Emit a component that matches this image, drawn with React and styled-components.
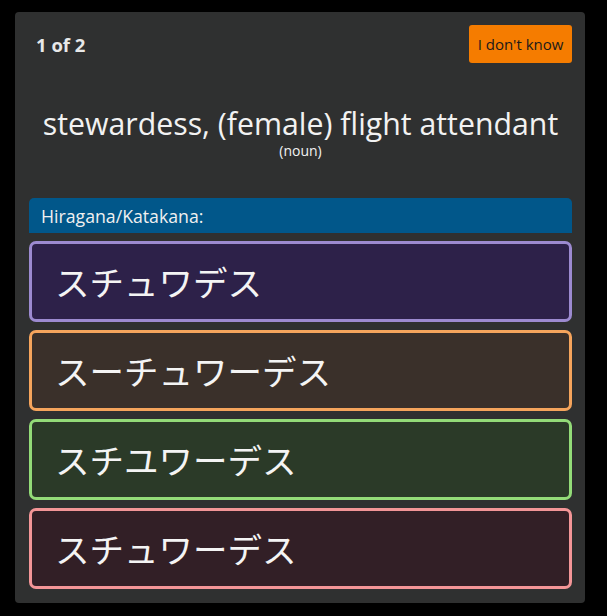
import React from "react";
import styled, { createGlobalStyle } from "styled-components";

const Global = createGlobalStyle`
  html, body { margin: 0; padding: 0; background: #000; }
  body { font-family: "Open Sans", "Noto Sans", sans-serif; }
  * { box-sizing: border-box; }
`;

const Page = styled.div`
  padding: 12px 22px 13px 15px;
  width: 607px;
`;

const Card = styled.div`
  width: 570px;
  background: #2f3030;
  border-radius: 4px;
  padding: 13px 13px 14px 14px;
  display: flex;
  flex-direction: column;
`;

const TopRow = styled.div`
  display: flex;
  justify-content: space-between;
  align-items: center;
`;

const Counter = styled.div`
  color: #e8e8e8;
  font-weight: 700;
  font-size: 18.5px;
  padding-left: 7px;
  padding-top: 1px;
`;

const Button = styled.button`
  background: #f57c00;
  color: #1a1a1a;
  border: none;
  border-radius: 3px;
  font-family: "Open Sans", sans-serif;
  font-size: 15px;
  height: 38px;
  width: 103px;
  padding: 0;
`;

const Prompt = styled.div`
  text-align: center;
  color: #f2f2f2;
  margin-top: 43px;
  margin-bottom: 38px;
`;

const Word = styled.div`
  font-size: 30.3px;
  line-height: 36px;
`;

const Pos = styled.div`
  font-size: 14px;
  line-height: 18px;
`;

const Header = styled.div`
  background: #01578a;
  color: #f0f0f0;
  font-size: 17.7px;
  height: 35px;
  display: flex;
  align-items: center;
  padding-left: 12px;
  border-radius: 5px 5px 0 0;
  margin-bottom: 8px;
`;

const Options = styled.div`
  display: flex;
  flex-direction: column;
  gap: 8px;
`;

const Option = styled.div`
  height: 81px;
  border: 3px solid ${(p) => p.$border};
  background: ${(p) => p.$bg};
  border-radius: 7px;
  display: flex;
  align-items: center;
  padding-left: 23px;
  padding-bottom: 2px;
  color: #f4f4f4;
  font-family: "Noto Sans CJK JP", sans-serif;
  font-size: 34.5px;
`;

const options = [
  { text: "スチュワデス", border: "#9c8ad0", bg: "#2d2149" },
  { text: "スーチュワーデス", border: "#f5a45c", bg: "#3a302a" },
  { text: "スチユワーデス", border: "#93db78", bg: "#2b3a28" },
  { text: "スチュワーデス", border: "#f39597", bg: "#321f26" },
];

export default function App() {
  return (
    <>
      <Global />
      <Page>
        <Card>
          <TopRow>
            <Counter>1 of 2</Counter>
            <Button>I don't know</Button>
          </TopRow>
          <Prompt>
            <Word>stewardess, (female) flight attendant</Word>
            <Pos>(noun)</Pos>
          </Prompt>
          <Header>Hiragana/Katakana:</Header>
          <Options>
            {options.map((o) => (
              <Option key={o.text} $border={o.border} $bg={o.bg}>
                {o.text}
              </Option>
            ))}
          </Options>
        </Card>
      </Page>
    </>
  );
}
